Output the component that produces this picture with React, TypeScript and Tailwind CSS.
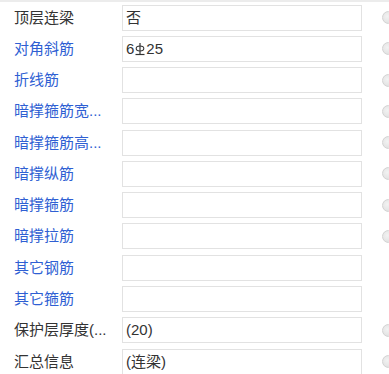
import React from 'react';

type Row = { label: string; blue?: boolean; value?: React.ReactNode; dot?: boolean };

function RebarMark() {
  // HRB400 grade symbol
  return (
    <svg width="10" height="14" viewBox="0 0 10 14" className="mx-[1px] inline-block align-[-1px]">
      <line x1="5" y1="1" x2="5" y2="12.5" stroke="#333" strokeWidth="1.2" />
      <ellipse cx="5" cy="6.5" rx="3.8" ry="2.5" fill="none" stroke="#333" strokeWidth="1.1" />
      <line x1="0.5" y1="12.5" x2="9.5" y2="12.5" stroke="#333" strokeWidth="1.2" />
    </svg>
  );
}

const rows: Row[] = [
  { label: '顶层连梁', value: '否', dot: true },
  {
    label: '对角斜筋',
    blue: true,
    value: (
      <>
        6<RebarMark />25
      </>
    ),
    dot: true,
  },
  { label: '折线筋', blue: true, dot: true },
  { label: '暗撑箍筋宽...', blue: true, dot: true },
  { label: '暗撑箍筋高...', blue: true, dot: true },
  { label: '暗撑纵筋', blue: true, dot: true },
  { label: '暗撑箍筋', blue: true, dot: true },
  { label: '暗撑拉筋', blue: true, dot: true },
  { label: '其它钢筋', blue: true },
  { label: '其它箍筋', blue: true },
  { label: '保护层厚度(...', value: '(20)', dot: true },
  { label: '汇总信息', value: '(连梁)', dot: true },
];

export default function App() {
  return (
    <div
      className="h-[374px] w-[389px] overflow-hidden bg-white"
      style={{ fontFamily: '"Liberation Sans", "Noto Sans CJK SC", sans-serif' }}
    >
      <div className="h-[2px] bg-[#ececec]" />
      <div className="flex flex-col">
        {rows.map((r) => (
          <div key={r.label} className="flex h-[31.27px] items-center">
            <div
              className={`w-[122px] shrink-0 pl-[14px] text-[15px] leading-[20px] whitespace-nowrap ${
                r.blue ? 'text-[#2f5fd3]' : 'text-[#333333]'
              }`}
            >
              {r.label}
            </div>
            <div className="flex h-[26px] w-[240px] shrink-0 items-center border border-[#e2e2e2] bg-white pl-[3px] text-[15px] leading-[20px] text-[#333333]">
              {r.value}
            </div>
            <div className="ml-[20px] flex w-[7px] shrink-0 overflow-hidden">
              {r.dot && (
                <div className="h-[13px] w-[13px] shrink-0 rounded-full border border-[#d2d2d2] bg-[radial-gradient(circle_at_40%_40%,#f2f2f2,#dcdcdc)]" />
              )}
            </div>
          </div>
        ))}
      </div>
    </div>
  );
}
